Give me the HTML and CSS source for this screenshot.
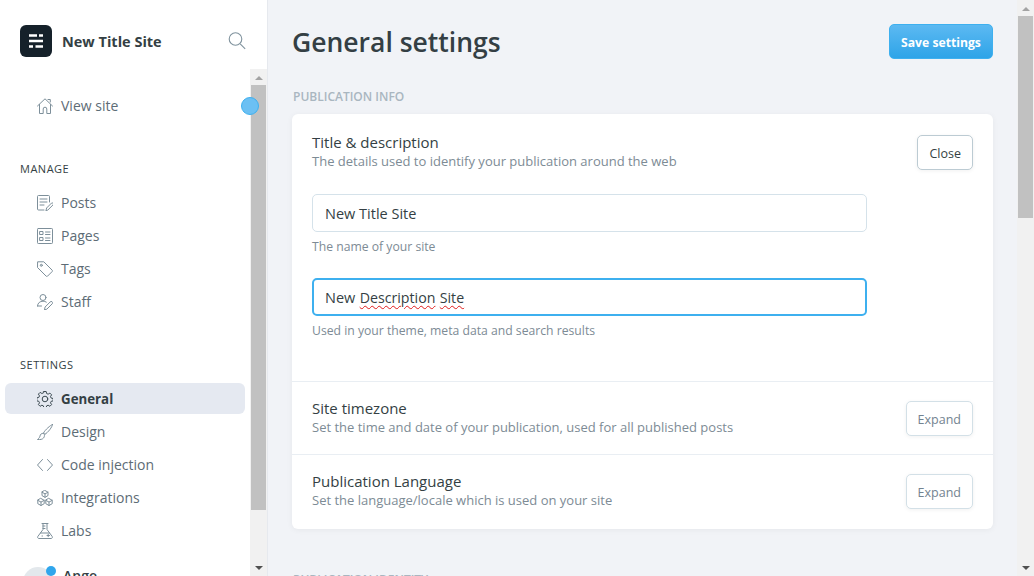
FILE: index.html
```html
<!DOCTYPE html>
<html lang="en">
<head>
    <meta charset="UTF-8">
    <meta name="viewport" content="width=device-width, initial-scale=1.0">
    <title>General settings</title>
    <link rel="stylesheet" href="styles.css">
</head>
<body>
    <aside class="sidebar">
        <div class="brand">
            <span class="brand-logo">
                <svg width="14" height="14" viewBox="0 0 14 14"><path d="M0 1.500h8M10 1.500h4M0 7h14M0 12.500h4M6.500 12.500h7.500" stroke="#fff" stroke-width="2.400" fill="none"/></svg>
            </span>
            <span class="brand-name">New Title Site</span>
            <svg class="search-icon" width="18" height="18" viewBox="0 0 18 18" fill="none" stroke="#7f929d" stroke-width="1.100"><circle cx="7.500" cy="7" r="6.300"/><path d="M12.200 11.800L17.200 16.800"/></svg>
        </div>
        <div class="side-scroll">
            <nav class="side-nav">
                <a class="nav-item nav-first">
                    <svg class="nav-icon" viewBox="0 0 16 16"><path d="M.5 8L8 .8l7.500 7.200M2.500 6.500v9h3.700v-4.500a1.800 1.800 0 013.600 0v4.500h3.700v-9M11 1.500h2.300v2.500"/></svg>
                    View site
                </a>

                <h4 class="nav-heading nav-heading-manage">Manage</h4>
                <a class="nav-item">
                    <svg class="nav-icon" viewBox="0 0 16 16"><path d="M7 15H1.500a1 1 0 01-1-1V1.500a1 1 0 011-1h10a1 1 0 011 1V7M3 4h7M3 7h7M3 10h4M9 15.500l.6-2.500 5-5a1.200 1.200 0 011.400 1.900l-5 5z"/></svg>
                    Posts
                </a>
                <a class="nav-item">
                    <svg class="nav-icon" viewBox="0 0 16 16"><rect x=".5" y=".5" width="15" height="15" rx=".8"/><rect x="3" y="3.500" width="3" height="3"/><rect x="3" y="9.500" width="3" height="3"/><path d="M8.500 4h4.500M8.500 6.500h4.500M8.500 10h4.500M8.500 12.500h4.500"/></svg>
                    Pages
                </a>
                <a class="nav-item">
                    <svg class="nav-icon" viewBox="0 0 16 16"><path d="M1 .8h5.800l8.400 8.400a1 1 0 010 1.300l-4.700 4.700a1 1 0 01-1.300 0L.8 6.800z"/><circle cx="4.300" cy="4.300" r="1"/></svg>
                    Tags
                </a>
                <a class="nav-item">
                    <svg class="nav-icon" viewBox="0 0 16 16"><circle cx="6" cy="3.500" r="3"/><path d="M.5 12c0-3 2.500-4.800 5.500-4.800 1.300 0 2.400.3 3.300.9M.5 12h4M7.500 15.500l.6-2.500 5-5a1.200 1.200 0 012.200 1.700l-5.200 5.200z"/></svg>
                    Staff
                </a>

                <h4 class="nav-heading nav-heading-settings">Settings</h4>
                <a class="nav-item nav-item-active">
                    <svg class="nav-icon" viewBox="0 0 16 16"><circle cx="8" cy="8" r="2.800"/><path d="M6.800.5h2.400l.4 2 1.500.7 1.800-1.100 1.700 1.700-1.100 1.800.7 1.500 2 .4v2.400l-2 .4-.7 1.500 1.100 1.800-1.700 1.700-1.800-1.100-1.500.7-.4 2H6.800l-.4-2-1.500-.7-1.800 1.100-1.700-1.700 1.100-1.800-.7-1.500-2-.4V6.800l2-.4.7-1.500-1.100-1.800 1.700-1.700 1.800 1.100 1.500-.7z"/></svg>
                    General
                </a>
                <a class="nav-item">
                    <svg class="nav-icon" viewBox="0 0 16 16"><path d="M15.500.5c-2 .5-7.500 5.500-9 8.500l1.300 1.300c3-1.500 7.700-7.500 7.700-9.800zM6.300 9.300c-2 0-3 1-3.300 2.700-.2 1.300-1 2.200-2.500 3.500 3 .3 5-.2 6-1.500.8-1 1.200-2 .9-3.300z"/></svg>
                    Design
                </a>
                <a class="nav-item">
                    <svg class="nav-icon" viewBox="0 0 16 16"><path d="M5.500 2.500L.5 8l5 5.500M10.500 2.500l5 5.500-5 5.500"/></svg>
                    Code injection
                </a>
                <a class="nav-item">
                    <svg class="nav-icon" viewBox="0 0 16 16"><path d="M8 .5l3 1.700v3.400L8 7.300 5 5.600V2.200zM5 2.200l3 1.700 3-1.700M8 3.900v3.400M4 8.500l3.200 1.800v3.400L4 15.500.8 13.700v-3.400zM.8 10.300L4 12.100l3.200-1.800M4 12.100v3.400M12 8.500l3.200 1.800v3.400L12 15.500l-3.200-1.800v-3.400zM8.800 10.300l3.200 1.800 3.200-1.800M12 12.100v3.400"/></svg>
                    Integrations
                </a>
                <a class="nav-item">
                    <svg class="nav-icon" viewBox="0 0 16 16"><path d="M5 .5h6M6 .5v6L.8 13.500a1.300 1.300 0 001 2h12.400a1.300 1.300 0 001-2L10 6.500v-6M6 3h2M6 5.500h2M3.500 10h9M10 12.500h2.500M11.200 11.300v2.400M5 13h.5"/></svg>
                    Labs
                </a>
            </nav>
            <div class="side-user">
                <span class="avatar"></span>
                <span class="user-name">Ange</span>
            </div>
            <span class="pulse-dot"></span>
            <div class="scrollbar scrollbar-side">
                <span class="arrow-up"></span>
                <span class="thumb thumb-side"></span>
                <span class="arrow-down"></span>
            </div>
        </div>
    </aside>

    <main class="content">
        <header class="page-head">
            <h1>General settings</h1>
            <button class="btn-save">Save settings</button>
        </header>

        <h2 class="section-title">Publication info</h2>
        <section class="card">
            <div class="card-row card-row-open">
                <div class="row-head">
                    <div>
                        <h3>Title &amp; description</h3>
                        <p>The details used to identify your publication around the web</p>
                    </div>
                    <button class="btn btn-close">Close</button>
                </div>
                <div class="field">
                    <div class="input">New Title Site</div>
                    <p>The name of your site</p>
                </div>
                <div class="field">
                    <div class="input input-focus">New <span class="misspelt">Description</span> <span class="misspelt">Site</span></div>
                    <p>Used in your theme, meta data and search results</p>
                </div>
            </div>
            <div class="card-row">
                <div class="row-head">
                    <div>
                        <h3>Site timezone</h3>
                        <p>Set the time and date of your publication, used for all published posts</p>
                    </div>
                    <button class="btn">Expand</button>
                </div>
            </div>
            <div class="card-row">
                <div class="row-head">
                    <div>
                        <h3>Publication Language</h3>
                        <p>Set the language/locale which is used on your site</p>
                    </div>
                    <button class="btn">Expand</button>
                </div>
            </div>
        </section>

        <h2 class="section-title section-next">Publication identity</h2>
    </main>

    <div class="scrollbar scrollbar-main">
        <span class="arrow-up"></span>
        <span class="thumb thumb-main"></span>
        <span class="arrow-down"></span>
    </div>
</body>
</html>
```

FILE: styles.css
```css
* {
    box-sizing: border-box;
}

html, body {
    height: 100%;
}

body {
    display: flex;
    height: 576px;
    margin: 0;
    overflow: hidden;
    font-family: "Open Sans", "Noto Sans", sans-serif;
    font-size: 13px;
    color: #343f44;
    background-color: #f1f3f7;
}

/* sidebar */
.sidebar {
    display: flex;
    flex-direction: column;
    flex: 0 0 268px;
    height: 576px;
    background-color: #fff;
    border-right: 1px solid #e6e9ee;
}

.brand {
    display: flex;
    align-items: center;
    flex: 0 0 69px;
    padding: 13px 21px 0 20px;
}

.brand-logo {
    display: flex;
    align-items: center;
    justify-content: center;
    width: 32px;
    height: 32px;
    background-color: #15212a;
    border-radius: 6px;
}

.brand-name {
    flex: 1;
    margin-left: 10px;
    font-size: 14.5px;
    font-weight: 700;
    color: #343f44;
}

.side-scroll {
    position: relative;
    z-index: 0;
    flex: 1;
    overflow: hidden;
}

.side-nav {
    width: 250px;
    padding: 21px 5px 0;
}

.nav-item {
    display: flex;
    align-items: center;
    height: 31px;
    margin-bottom: 2px;
    padding-left: 32px;
    font-size: 14px;
    color: #5d6c76;
    border-radius: 6px;
}

.nav-icon {
    flex: none;
    width: 16px;
    height: 16px;
    margin-right: 8px;
    fill: none;
    stroke: #7d8f9a;
    stroke-width: 1;
    stroke-linejoin: round;
    stroke-linecap: round;
}

.nav-item-active {
    font-size: 13.3px;
    font-weight: 700;
    color: #343f44;
    background-color: #e5e9f1;
}

.nav-item-active .nav-icon {
    stroke: #3c4a52;
}

.nav-heading {
    margin: 0 0 0 15px;
    font-size: 11px;
    line-height: 16px;
    font-weight: 400;
    letter-spacing: .5px;
    text-transform: uppercase;
    color: #343f44;
}

.nav-heading-manage {
    margin-top: 40px;
    margin-bottom: 10px;
}

.nav-heading-settings {
    margin-top: 40px;
    margin-bottom: 10px;
}

.side-user {
    display: flex;
    align-items: flex-start;
    padding: 19px 0 0 23px;
}

.avatar {
    position: relative;
    width: 30px;
    height: 30px;
    background-color: #e3e8ec;
    border-radius: 50%;
}

.avatar::after {
    content: "";
    position: absolute;
    top: -1px;
    right: -3px;
    width: 10px;
    height: 10px;
    background-color: #30a6ec;
    border-radius: 50%;
}

.user-name {
    margin: -1px 0 0 10px;
    font-size: 14px;
    font-weight: 600;
}

.pulse-dot {
    position: absolute;
    top: 28px;
    left: 241px;
    width: 18px;
    height: 18px;
    background-color: #6cc0f3;
    border: 1px solid #3eb0ef;
    border-radius: 50%;
}

/* fake scrollbars, the screenshot has the windows ones */
.scrollbar {
    display: flex;
    flex-direction: column;
    align-items: center;
    width: 17px;
    background-color: #f1f1f1;
}

.scrollbar-side {
    position: absolute;
    top: 0;
    right: 0;
    bottom: 0;
    z-index: -1;
}

.scrollbar-main {
    flex: none;
    height: 576px;
}

.thumb {
    margin-top: 5px;
    background-color: #c1c1c1;
}

.scrollbar .thumb {
    width: 15px;
}

.thumb-side {
    height: 425px;
}

.thumb-main {
    height: 202px;
}

.arrow-up,
.arrow-down {
    flex: none;
    width: 0;
    height: 0;
    border-left: 4px solid transparent;
    border-right: 4px solid transparent;
}

.arrow-up {
    margin-top: 7px;
    border-bottom: 4px solid #a3a3a3;
}

.arrow-down {
    margin-top: auto;
    margin-bottom: 6px;
    border-top: 4px solid #505050;
}

/* main */
.content {
    flex: 1;
    min-width: 0;
    padding: 0 24px;
    overflow: hidden;
}

.page-head {
    display: flex;
    align-items: center;
    justify-content: space-between;
    height: 83px;
}

.page-head h1 {
    margin: 0;
    font-size: 26.5px;
    font-weight: 600;
    color: #343f44;
}

.btn-save {
    width: 104px;
    height: 35px;
    padding: 1px 0 0;
    font: 700 12.2px "Open Sans", "Noto Sans", sans-serif;
    color: #fff;
    background: linear-gradient(#5cb9f2, #2ea4e8);
    border: 1px solid #3eb0ef;
    border-radius: 5px;
}

.section-title {
    margin: 6px 0 9px 1px;
    font-size: 12px;
    line-height: 16px;
    font-weight: 600;
    text-transform: uppercase;
    color: #a9b6c0;
}

.section-next {
    margin-top: 43px;
}

.card {
    height: 415px;
    background-color: #fff;
    border-radius: 6px;
    box-shadow: 0 1px 6px rgba(0, 0, 0, .05);
}

.card-row {
    height: 73px;
    padding: 18px 20px 0;
    border-top: 1px solid #e9eef3;
}

.card-row-open {
    height: 267px;
    padding-top: 20px;
    border-top: 0;
}

.row-head {
    display: flex;
    align-items: flex-start;
    justify-content: space-between;
}

.row-head h3 {
    margin: -1px 0 1px;
    font-size: 15px;
    line-height: 18px;
    font-weight: 500;
    color: #343f44;
}

.row-head p {
    margin: 0;
    font-size: 13px;
    line-height: 18px;
    color: #7d8b95;
}

.btn {
    height: 35px;
    margin-top: 1px;
    padding: 1px 11px 0;
    font: 400 12.5px "Open Sans", "Noto Sans", sans-serif;
    color: #738390;
    background-color: #fff;
    border: 1px solid #d3e0e7;
    border-radius: 5px;
    box-shadow: 0 1px 4px rgba(0, 0, 0, .06);
}

.btn-close {
    color: #343f44;
    border-color: #bccbd3;
}

.field {
    width: 555px;
    margin-bottom: 22px;
}

.row-head + .field {
    margin-top: 24px;
}

.field p {
    margin: 6px 0 0;
    font-size: 12.2px;
    line-height: 18px;
    color: #7d8b95;
}

.input {
    display: flex;
    gap: .3em;
    align-items: center;
    height: 38px;
    padding: 0 12px;
    font-size: 14.5px;
    color: #343f44;
    border: 1px solid #d5e2ea;
    border-radius: 5px;
}

.input-focus {
    padding: 0 11px;
    border: 2px solid #3eb0ef;
}

.misspelt {
    font-size: 14.2px;
    text-decoration: underline wavy #e01b1b 1px;
    text-underline-offset: 2px;
}
```
